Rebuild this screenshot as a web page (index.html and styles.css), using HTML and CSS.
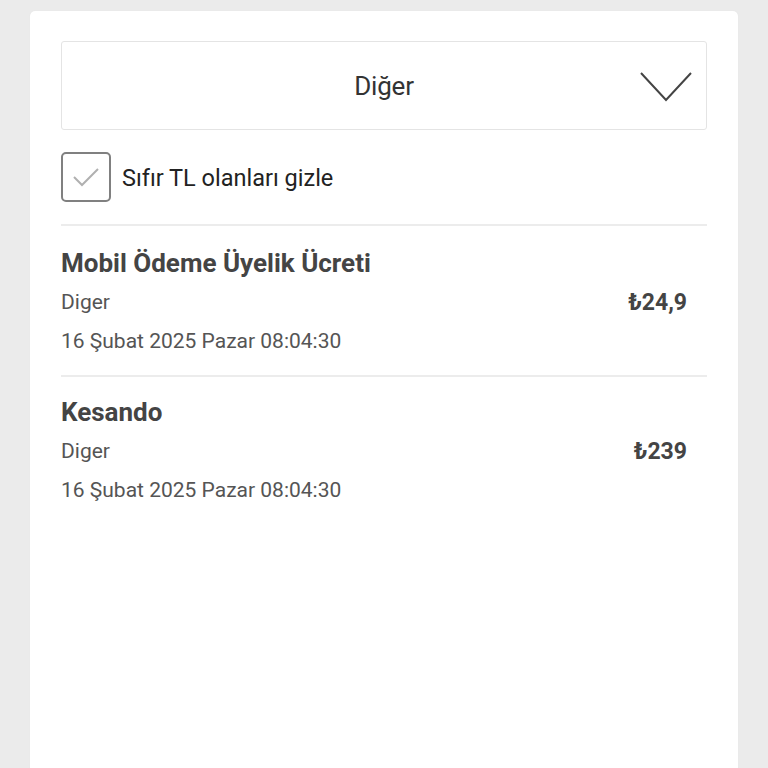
FILE: index.html
```html
<!DOCTYPE html>
<html lang="tr">
<head>
    <meta charset="UTF-8">
    <meta name="viewport" content="width=device-width, initial-scale=1.0">
    <title>Diğer</title>
    <link rel="stylesheet" href="styles.css">
</head>
<body>
    <div class="card">
        <div class="select">
            <span class="select-label">Diğer</span>
            <svg class="chevron" width="52" height="30" viewBox="0 0 52 30">
                <polyline points="1,1 26,28 51,1" fill="none" stroke="#444" stroke-width="2"/>
            </svg>
        </div>

        <label class="filter">
            <span class="checkbox">
                <svg width="28" height="22" viewBox="0 0 28 22">
                    <polyline points="2,11 10,19 26,3" fill="none" stroke="#b0b0b0" stroke-width="2"/>
                </svg>
            </span>
            <span class="filter-text">Sıfır TL olanları gizle</span>
        </label>

        <div class="item">
            <div class="item-info">
                <p class="item-title">Mobil Ödeme Üyelik Ücreti</p>
                <p class="item-sub">Diger</p>
                <p class="item-sub">16 Şubat 2025 Pazar 08:04:30</p>
            </div>
            <div class="item-amount">₺24,9</div>
        </div>

        <div class="item">
            <div class="item-info">
                <p class="item-title">Kesando</p>
                <p class="item-sub">Diger</p>
                <p class="item-sub">16 Şubat 2025 Pazar 08:04:30</p>
            </div>
            <div class="item-amount">₺239</div>
        </div>
    </div>
</body>
</html>
```

FILE: styles.css
```css
* {
    box-sizing: border-box;
}

body {
    font-family: Roboto, "Noto Sans", sans-serif;
    background-color: #ebebeb;
    color: #333;
    margin: 0;
    padding: 11px 30px 0 30px;
    height: 768px;
    overflow: hidden;
}

.card {
    background-color: #fff;
    padding: 30px 31px 0 31px;
    border-radius: 5px 5px 0 0;
    height: 757px;
    box-shadow: 0 0 1px #ddd;
}

.select {
    height: 89px;
    border: 1px solid #e4e4e4;
    border-radius: 3px;
    display: flex;
    align-items: center;
    justify-content: center;
    position: relative;
}

.select-label {
    font-size: 26px;
    color: #333;
    letter-spacing: -0.2px;
}

.chevron {
    position: absolute;
    right: 14px;
    top: 30px;
}

.filter {
    display: flex;
    align-items: center;
    gap: 11px;
    padding: 22px 0 22px 0;
    border-bottom: 2px solid #ececec;
}

.checkbox {
    width: 50px;
    height: 50px;
    border: 2px solid #808080;
    border-radius: 5px;
    display: flex;
    align-items: center;
    justify-content: center;
}

.filter-text {
    font-size: 23.5px;
    color: #222;
    padding-top: 2px;
}

.item {
    display: flex;
    justify-content: space-between;
    align-items: center;
    padding: 18px 20px 14px 0;
    border-bottom: 2px solid #ececec;
}

.item + .item {
    padding-top: 16px;
}

.item:last-child {
    border-bottom: none;
}

.item p {
    margin: 0;
    line-height: 39px;
}

.item-title {
    font-weight: bold;
    font-size: 26px;
    color: #444;
}

.item-sub {
    font-size: 21px;
    color: #555;
}

.item-amount {
    font-weight: bold;
    font-size: 23px;
    color: #444;
}
```
